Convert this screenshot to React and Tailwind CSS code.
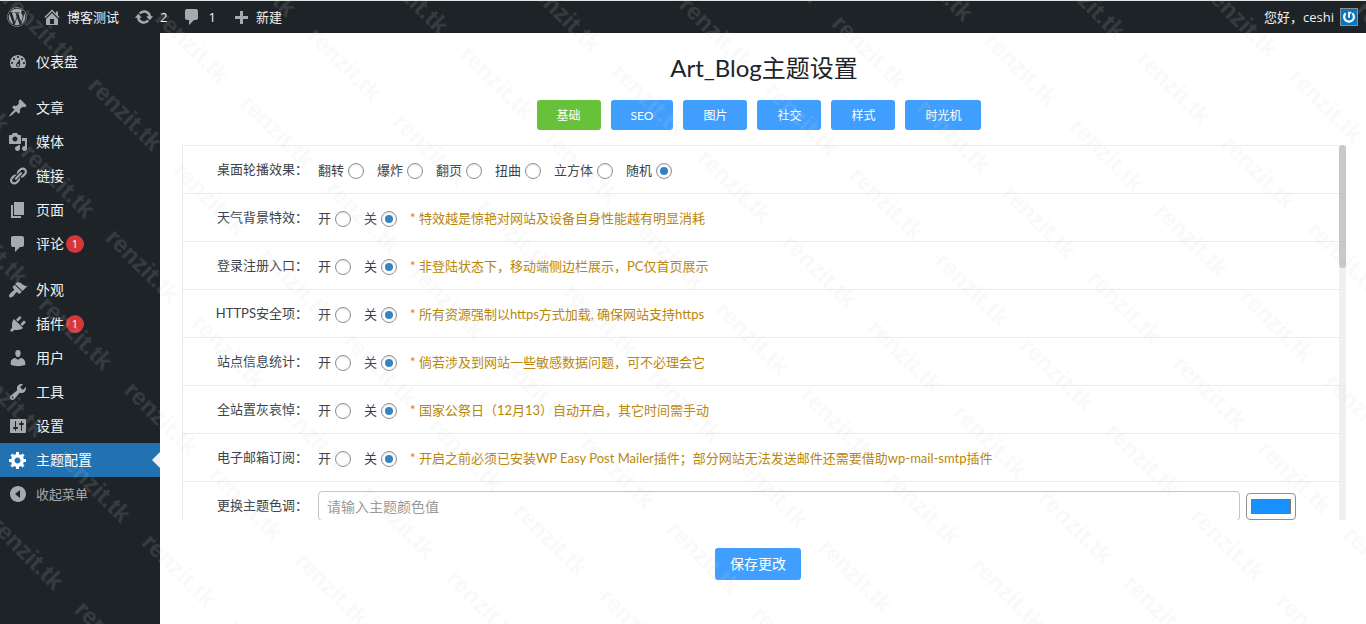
import { useState } from 'react';
import { FaWordpress } from 'react-icons/fa';

const icons = {
  home: 'M16 8.5l1.53 1.53-1.06 1.06L10 4.6l-6.47 6.49-1.06-1.06L10 2.5l4 4v-2h2v4zm-6-2.46l6 5.99V18H4v-5.97zM12 17v-5H8v5h4z',
  update: 'M10.2 3.28c3.53 0 6.43 2.61 6.92 6h2.08l-3.5 4-3.5-4h2.32c-.45-1.97-2.21-3.45-4.32-3.45-1.45 0-2.73.71-3.54 1.78L4.95 5.66C6.23 4.2 8.11 3.28 10.2 3.28zm-.4 13.44c-3.52 0-6.43-2.61-6.92-6H.8l3.5-4c1.17 1.33 2.33 2.67 3.5 4H5.48c.45 1.97 2.21 3.45 4.32 3.45 1.45 0 2.73-.71 3.54-1.78l1.71 1.95c-1.28 1.46-3.15 2.38-5.25 2.38z',
  plus: 'M17 9v3h-5v5H9v-5H4V9h5V4h3v5h5z',
  dashboard: 'M3.76 16h12.48c1.1-1.37 1.76-3.11 1.76-5 0-4.42-3.58-8-8-8s-8 3.58-8 8c0 1.89.66 3.63 1.76 5zM10 4c.55 0 1 .45 1 1s-.45 1-1 1-1-.45-1-1 .45-1 1-1zM6 6c.55 0 1 .45 1 1s-.45 1-1 1-1-.45-1-1 .45-1 1-1zm8 0c.55 0 1 .45 1 1s-.45 1-1 1-1-.45-1-1 .45-1 1-1zm-5.37 5.55L12 7v6c0 1.1-.9 2-2 2s-2-.9-2-2c0-.57.24-1.08.63-1.45zM4 10c.55 0 1 .45 1 1s-.45 1-1 1-1-.45-1-1 .45-1 1-1zm12 0c.55 0 1 .45 1 1s-.45 1-1 1-1-.45-1-1 .45-1 1-1zm-5 3c0-.55-.45-1-1-1s-1 .45-1 1 .45 1 1 1 1-.45 1-1z',
  post: 'M10.44 3.02l1.82-1.82 6.36 6.35-1.83 1.82c-1.05-.68-2.48-.57-3.41.36l-.75.75c-.92.93-1.04 2.35-.35 3.41l-1.83 1.82-2.41-2.41-2.8 2.79c-.42.42-3.38 2.71-3.8 2.29s1.86-3.39 2.28-3.81l2.79-2.79L4.1 9.36l1.83-1.82c1.05.69 2.48.57 3.4-.36l.75-.75c.93-.92 1.05-2.35.36-3.41z',
  media: 'M13 11V4c0-.55-.45-1-1-1h-1.67L9 1H5L3.67 3H2c-.55 0-1 .45-1 1v7c0 .55.45 1 1 1h10c.55 0 1-.45 1-1zM7 4.5c1.38 0 2.5 1.12 2.5 2.5S8.38 9.5 7 9.5 4.5 8.38 4.5 7 5.62 4.5 7 4.5zM14 6h5v10.5c0 1.38-1.12 2.5-2.5 2.5S14 17.88 14 16.5s1.12-2.5 2.5-2.5c.17 0 .34.02.5.05V9h-3V6zm-4 8.05V13h2v3.5c0 1.38-1.12 2.5-2.5 2.5S7 17.88 7 16.5 8.12 14 9.5 14c.17 0 .34.02.5.05z',
  links: 'M17.74 2.76c1.68 1.69 1.68 4.41 0 6.1l-1.53 1.52c-1.12 1.12-2.7 1.47-4.14 1.09l2.62-2.61.76-.77.76-.76c.84-.84.84-2.2 0-3.04-.84-.85-2.2-.85-3.04 0l-.77.76-3.38 3.38c-.37-1.44-.02-3.02 1.1-4.14l1.52-1.53c1.69-1.68 4.42-1.68 6.1 0zM8.59 13.43l5.34-5.34c.42-.42.42-1.1 0-1.52-.44-.43-1.13-.39-1.53 0l-5.33 5.34c-.42.42-.42 1.1 0 1.52.44.43 1.13.39 1.52 0zm-.76 2.29l4.14-4.15c.38 1.44.03 3.02-1.09 4.14l-1.52 1.53c-1.69 1.68-4.41 1.68-6.1 0-1.68-1.68-1.68-4.42 0-6.1l1.53-1.52c1.12-1.12 2.7-1.47 4.14-1.1l-4.14 4.15c-.85.84-.85 2.2 0 3.05.84.84 2.2.84 3.04 0z',
  page: 'M6 15V2h10v13H6zm-1 1h8v2H3V5h2v11z',
  comments: 'M5 2h9c1.1 0 2 .9 2 2v7c0 1.1-.9 2-2 2h-2l-5 5v-5H5c-1.1 0-2-.9-2-2V4c0-1.1.9-2 2-2z',
  appearance: 'M14.48 11.06L7.41 3.99l1.5-1.5c.5-.56 2.3-.47 3.51.32 1.21.8 1.43 1.28 2.91 2.1 1.18.64 2.45 1.26 4.45.85zm-.71.71L6.7 4.7 4.93 6.47c-.39.39-.39 1.02 0 1.41l1.06 1.06c.39.39.39 1.03 0 1.42-.6.6-1.43 1.11-2.21 1.69-.35.26-.7.53-1.01.84C1.43 14.23.4 16.08 1.4 17.07c.99 1 2.84-.03 4.18-1.36.31-.31.58-.66.85-1.02.57-.78 1.08-1.61 1.69-2.21.39-.39 1.02-.39 1.41 0l1.06 1.06c.39.39 1.02.39 1.41 0z',
  plugins: 'M13.11 4.36L9.87 7.6 8 5.73l3.24-3.24c.35-.34 1.05-.2 1.56.32.52.51.66 1.21.31 1.55zm-8 1.77l.91-1.12 9.01 9.01-1.19.84c-.71.71-2.63 1.16-3.82 1.16H6.14L4.9 17.26c-.59.59-1.54.59-2.12 0-.59-.58-.59-1.53 0-2.12l1.24-1.24v-3.88c0-1.13.4-3.19 1.09-3.89zm7.26 3.97l3.24-3.24c.34-.35 1.04-.21 1.55.31.52.51.66 1.21.31 1.55l-3.24 3.25z',
  users: 'M10 9.25c-2.27 0-2.73-3.44-2.73-3.44C7 4.02 7.82 2 9.97 2c2.16 0 2.98 2.02 2.71 3.81 0 0-.41 3.44-2.68 3.44zm0 2.57L12.72 10c2.39 0 4.52 2.33 4.52 4.53v2.49s-3.65 1.13-7.24 1.13c-3.65 0-7.24-1.13-7.24-1.13v-2.49c0-2.25 1.94-4.48 4.47-4.48z',
  tools: 'M16.68 9.77c-1.34 1.34-3.3 1.67-4.95.99l-5.41 6.52c-.99.99-2.59.99-3.58 0s-.99-2.59 0-3.57l6.52-5.42c-.68-1.65-.35-3.61.99-4.95 1.28-1.28 3.12-1.62 4.72-1.06l-2.89 2.89 2.82 2.82 2.86-2.87c.53 1.58.18 3.39-1.08 4.65zM3.81 16.21c.4.39 1.04.39 1.43 0 .4-.4.4-1.04 0-1.43-.39-.4-1.03-.4-1.43 0-.39.39-.39 1.03 0 1.43z',
  settings: 'M18 16V4c0-.55-.45-1-1-1H3c-.55 0-1 .45-1 1v12c0 .55.45 1 1 1h14c.55 0 1-.45 1-1zM8 11h1c.55 0 1 .45 1 1s-.45 1-1 1H8v1.5c0 .28-.22.5-.5.5s-.5-.22-.5-.5V13H6c-.55 0-1-.45-1-1s.45-1 1-1h1V5.5c0-.28.22-.5.5-.5s.5.22.5.5V11zm5-2h-1c-.55 0-1-.45-1-1s.45-1 1-1h1V5.5c0-.28.22-.5.5-.5s.5.22.5.5V7h1c.55 0 1 .45 1 1s-.45 1-1 1h-1v5.5c0 .28-.22.5-.5.5s-.5-.22-.5-.5V9z',
  generic: 'M18 12h-2.18c-.17.7-.44 1.35-.81 1.93l1.54 1.54-2.1 2.1-1.54-1.54c-.58.36-1.23.63-1.91.79V19H8v-2.18c-.68-.16-1.33-.43-1.91-.79l-1.54 1.54-2.12-2.12 1.54-1.54c-.36-.58-.63-1.23-.79-1.91H1V9.03h2.17c.16-.7.44-1.35.8-1.94L2.43 5.55l2.1-2.1 1.54 1.54c.58-.37 1.24-.64 1.93-.81V2h3v2.18c.68.16 1.33.43 1.91.79l1.54-1.54 2.12 2.12-1.54 1.54c.36.59.64 1.24.8 1.94H18V12zm-8.5 1.5c1.66 0 3-1.34 3-3s-1.34-3-3-3-3 1.34-3 3 1.34 3 3 3z',
  collapse: 'M10 2c4.42 0 8 3.58 8 8s-3.58 8-8 8-8-3.58-8-8 3.58-8 8-8zm2 12V6l-5 4z'
};

const menuGroups = [
  [{ icon: 'dashboard', label: '仪表盘' }],
  [
    { icon: 'post', label: '文章' },
    { icon: 'media', label: '媒体' },
    { icon: 'links', label: '链接' },
    { icon: 'page', label: '页面' },
    { icon: 'comments', label: '评论', count: 1 }
  ],
  [
    { icon: 'appearance', label: '外观' },
    { icon: 'plugins', label: '插件', count: 1 },
    { icon: 'users', label: '用户' },
    { icon: 'tools', label: '工具' },
    { icon: 'settings', label: '设置' },
    { icon: 'generic', label: '主题配置', active: true }
  ]
];

const tabs = ['基础', 'SEO', '图片', '社交', '样式', '时光机'];

const settings = [
  { name: 'carousel', label: '桌面轮播效果', options: ['翻转', '爆炸', '翻页', '扭曲', '立方体', '随机'], value: '随机' },
  { name: 'weather', label: '天气背景特效', hint: '* 特效越是惊艳对网站及设备自身性能越有明显消耗' },
  { name: 'login', label: '登录注册入口', hint: '* 非登陆状态下，移动端侧边栏展示，PC仅首页展示' },
  { name: 'https', label: 'HTTPS安全项', hint: '* 所有资源强制以https方式加载, 确保网站支持https' },
  { name: 'stats', label: '站点信息统计', hint: '* 倘若涉及到网站一些敏感数据问题，可不必理会它' },
  { name: 'mourning', label: '全站置灰哀悼', hint: '* 国家公祭日（12月13）自动开启，其它时间需手动' },
  { name: 'mail', label: '电子邮箱订阅', hint: '* 开启之前必须已安装WP Easy Post Mailer插件；部分网站无法发送邮件还需要借助wp-mail-smtp插件' }
];

const Icon = ({ name, className = '' }) => (
  <svg viewBox="0 0 20 20" className={`size-5 shrink-0 fill-current ${className}`} fillRule="evenodd" aria-hidden="true">
    <path d={icons[name]} />
  </svg>
);

const AdminBar = () => (
  <header className="flex h-[33px] items-center border-t border-[#dfe5e2] bg-[#1d2327] pl-[7px] pr-2 text-[13px] leading-8 text-[#f0f0f1]">
    <a href="#about" aria-label="WordPress" className="mr-[15px] text-[#a7aaad]">
      <FaWordpress className="size-5" />
    </a>
    <a href="#site" className="mr-[15px] flex items-center gap-[5px]">
      <Icon name="home" className="text-[#a7aaad]" />
      博客测试
    </a>
    <a href="#updates" className="mr-[15px] flex items-center gap-[6px]">
      <Icon name="update" className="text-[#a7aaad]" />
      2
    </a>
    <a href="#comments" className="mr-[15px] flex items-center gap-[6px]">
      <Icon name="comments" className="text-[#a7aaad]" />
      1
    </a>
    <a href="#new" className="flex items-center gap-[5px]">
      <Icon name="plus" className="text-[#a7aaad]" />
      新建
    </a>
    <a href="#profile" className="ml-auto flex items-center gap-[6px]">
      您好，ceshi
      <svg viewBox="0 0 16 16" className="size-[18px] border border-[#8c8f94] bg-[#0a75bc]" aria-hidden="true">
        <path d="M4.6 4.2a4.9 4.9 0 1 0 6.8 0" fill="none" stroke="#fff" strokeWidth="2.2" />
        <path d="M8 8.8V3.6h2.4" fill="none" stroke="#fff" strokeWidth="1.8" />
      </svg>
    </a>
  </header>
);

const MenuItem = ({ item }) => (
  <li>
    <a
      href={`#${item.icon}`}
      className={`relative flex h-[34px] items-center gap-2 pl-2 ${
        item.active ? 'bg-[#2271b1] text-white' : 'text-[#f0f0f1] hover:text-[#72aee6]'
      }`}
    >
      <Icon name={item.icon} className={item.active ? 'text-white' : 'text-[#a7aaad]'} />
      <span className="flex items-center gap-0.5">
        {item.label}
        {item.count && (
          <span className="size-[18px] rounded-full bg-[#d63638] text-center text-[11px] leading-[18px] text-white">
            {item.count}
          </span>
        )}
      </span>
      {item.active && (
        <span className="absolute right-0 top-1/2 -translate-y-1/2 border-8 border-l-0 border-transparent border-r-[#f0f0f1]"></span>
      )}
    </a>
  </li>
);

const Sidebar = () => (
  <nav className="w-40 shrink-0 bg-[#1d2327] pt-3 text-sm">
    <div className="flex flex-col gap-3">
      {menuGroups.map((group, i) => (
        <ul key={i}>
          {group.map((item) => (
            <MenuItem key={item.label} item={item} />
          ))}
        </ul>
      ))}
    </div>
    <button type="button" className="flex h-[34px] w-full items-center gap-2 pl-2 text-[13px] text-[#a7aaad]">
      <Icon name="collapse" />
      收起菜单
    </button>
  </nav>
);

const RowLabel = ({ children, ...props }) => (
  <span className="w-[125px] shrink-0 text-right leading-[46px]" {...props}>
    {children}：
  </span>
);

const RadioRow = ({ setting }) => {
  const { name, label, options = ['开', '关'], value = '关', hint } = setting;

  return (
    <div role="radiogroup" aria-labelledby={`${name}-label`} className="flex h-12 gap-[10px] border-t border-[#ebebeb]">
      <RowLabel id={`${name}-label`}>{label}</RowLabel>
      <div className="flex items-center gap-[13px] pt-0.5">
        {options.map((option) => (
          <label key={option} className="flex items-center gap-1">
            {option}
            <input
              type="radio"
              name={name}
              defaultChecked={option === value}
              className="grid size-4 appearance-none place-content-center rounded-full border border-[#8c8f94] bg-white shadow-[inset_0_1px_2px_rgba(0,0,0,0.1)] checked:before:size-2 checked:before:rounded-full checked:before:bg-[#3582c4]"
            />
          </label>
        ))}
        {hint && <span className="text-[#b8860b]">{hint}</span>}
      </div>
    </div>
  );
};

// Tiled diagonal text over the whole page
const Watermark = () => (
  <svg className="pointer-events-none absolute inset-0 size-full" aria-hidden="true">
    <defs>
      <pattern id="watermark" width="241" height="190" patternUnits="userSpaceOnUse" patternTransform="translate(166 5) rotate(45)">
        <g className="fill-[#d8d8d8]/14 font-['Liberation_Sans',sans-serif] text-[24px] font-bold">
          <text x="2" y="19">renzit.tk</text>
          <text x="122" y="19">renzit.tk</text>
          <text x="2" y="114">renzit.tk</text>
          <text x="122" y="114">renzit.tk</text>
        </g>
      </pattern>
    </defs>
    <rect width="100%" height="100%" fill="url(#watermark)" />
  </svg>
);

const App = () => {
  const [activeTab, setActiveTab] = useState('基础');
  const [themeColor, setThemeColor] = useState('#1890ff');

  return (
    <div className="relative flex min-h-screen flex-col bg-white font-['Open_Sans','Noto_Sans_CJK_SC',sans-serif] text-[13px] text-[#3c434a]">
      <AdminBar />

      <div className="flex flex-1">
        <Sidebar />

        <main className="flex min-w-0 flex-1 flex-col items-center pl-[22px] pr-5 pt-[15px] font-['Lato','Noto_Sans_CJK_SC',sans-serif]">
          <h1 className="text-2xl leading-10 text-[#1d2327]">Art_Blog主题设置</h1>

          <div className="mt-3 flex">
            {tabs.map((tab) => (
              <button
                key={tab}
                type="button"
                onClick={() => setActiveTab(tab)}
                className={`mr-[10px] h-[30px] rounded-[3px] px-5 pt-0.5 text-xs text-white ${
                  tab === activeTab ? 'bg-[#67c23a]' : 'bg-[#409eff]'
                }`}
              >
                {tab}
              </button>
            ))}
          </div>

          <div className="mt-[15px] flex h-[375px] w-full overflow-hidden">
            <div className="min-w-0 flex-1 border-l border-[#ebebeb]">
              {settings.map((setting) => (
                <RadioRow key={setting.name} setting={setting} />
              ))}
              <div className="flex gap-[10px] border-t border-[#ebebeb] pr-[43px]">
                <RowLabel>更换主题色调</RowLabel>
                <div className="flex h-12 flex-1 items-center gap-[6px]">
                  <input
                    type="text"
                    aria-label="更换主题色调"
                    placeholder="请输入主题颜色值"
                    className="h-[30px] min-w-0 flex-1 rounded border border-[#c0c4cc] px-2 text-sm placeholder:text-[#999]"
                  />
                  <input
                    type="color"
                    aria-label="选择颜色"
                    value={themeColor}
                    onChange={(e) => setThemeColor(e.target.value)}
                    className="h-[27px] w-[50px] rounded border border-[#8c8f94] bg-white px-0.5 py-px"
                  />
                </div>
              </div>
            </div>
            <div className="w-[7px] bg-[#f0f0ee]">
              <div className="h-[123px] rounded-full bg-[#c8c8c8]"></div>
            </div>
          </div>

          <button type="submit" className="mr-3 mt-7 h-8 rounded-[3px] bg-[#409eff] px-[15px] text-sm text-white">
            保存更改
          </button>
        </main>
      </div>

      <Watermark />
    </div>
  );
};

export default App;
